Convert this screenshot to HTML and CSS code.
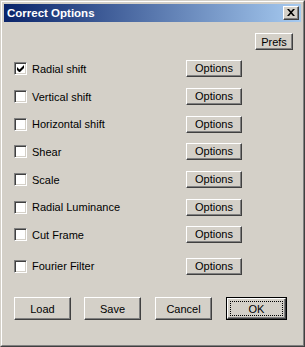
FILE: index.html
```html
<!DOCTYPE html>
<html>
<head>
<meta charset="utf-8">
<link rel="stylesheet" href="styles.css">
</head>
<body>
<div class="window">
  <div class="frame">
    <div class="titlebar">
      <span class="title">Correct Options</span>
      <span class="close">
        <svg width="8" height="7" viewBox="0 0 8 7"><path d="M0 0h2l2 2.3L6 0h2L5 3.5 8 7H6L4 4.7 2 7H0l3-3.5z" fill="#000"/></svg>
      </span>
    </div>
    <div class="content">
      <div class="prefs-row"><span class="btn prefs">Prefs</span></div>
      <div class="options">
        <div class="row"><label class="chk"><span class="box"><svg width="7" height="7" viewBox="0 0 7 7"><path d="M0 2v3l2 2h1l4-4V0L2.5 4.5z" fill="#000"/></svg></span>Radial shift</label><span class="btn opt">Options</span></div>
        <div class="row"><label class="chk"><span class="box"></span>Vertical shift</label><span class="btn opt">Options</span></div>
        <div class="row"><label class="chk"><span class="box"></span>Horizontal shift</label><span class="btn opt">Options</span></div>
        <div class="row"><label class="chk"><span class="box"></span>Shear</label><span class="btn opt">Options</span></div>
        <div class="row"><label class="chk"><span class="box"></span>Scale</label><span class="btn opt">Options</span></div>
        <div class="row"><label class="chk"><span class="box"></span>Radial Luminance</label><span class="btn opt">Options</span></div>
        <div class="row"><label class="chk"><span class="box"></span>Cut Frame</label><span class="btn opt">Options</span></div>
        <div class="row last"><label class="chk"><span class="box"></span>Fourier Filter</label><span class="btn opt">Options</span></div>
      </div>
      <div class="actions">
        <span class="btn act">Load</span>
        <span class="btn act">Save</span>
        <span class="btn act">Cancel</span>
        <span class="default"><span class="btn ok"><span class="focus">OK</span></span></span>
      </div>
    </div>
  </div>
</div>
</body>
</html>
```
FILE: styles.css
```css
html, body { margin: 0; padding: 0; background: #d4d0c8; }
.window {
  width: 305px; height: 347px; box-sizing: border-box;
  background: #d4d0c8;
  border: 1px solid; border-color: #d4d0c8 #404040 #404040 #d4d0c8;
  font-family: "Liberation Sans", Arial, sans-serif; font-size: 11px; color: #000;
}
.frame {
  height: 100%; box-sizing: border-box;
  border: 1px solid; border-color: #fff #808080 #808080 #fff;
  padding: 2px;
  display: flex; flex-direction: column;
}
.titlebar {
  height: 18px; flex: none;
  background: linear-gradient(to right, #0a246a, #a6caf0);
  display: flex; align-items: center; justify-content: space-between;
  padding-left: 3px;
}
.title { color: #fff; font-weight: bold; font-size: 11.5px; }
.close {
  width: 14px; height: 12px; margin-right: 2px;
  background: #d4d0c8;
  border: 1px solid; border-color: #fff #404040 #404040 #fff;
  box-shadow: inset -1px -1px 0 #808080;
  display: flex; align-items: center; justify-content: center;
}
.close svg { display: block; margin-left: -1px; margin-top: -1px; }
.content { padding: 11px 8px 0 10px; }
.prefs-row { display: flex; justify-content: flex-end; }
.btn {
  box-sizing: border-box;
  background: #d4d0c8;
  border: 1px solid; border-color: #fff #404040 #404040 #fff;
  box-shadow: inset -1px -1px 0 #808080;
  display: flex; align-items: center; justify-content: center;
}
.prefs { width: 38px; height: 17px; }
.options { margin-top: 5px; }
.row {
  height: 27.7px;
  display: grid; grid-template-columns: 172px 56px; align-items: center;
}
.row.last { margin-top: 3.5px; }
.opt { height: 17px; padding-bottom: 1px; }
.chk { display: flex; align-items: center; gap: 5px; }
.box {
  width: 13px; height: 13px; box-sizing: border-box; flex: none;
  background: #fff;
  border: 1px solid; border-color: #808080 #fff #fff #808080;
  box-shadow: inset 1px 1px 0 #404040, inset -1px -1px 0 #d4d0c8;
  display: flex; align-items: center; justify-content: center;
}
.box svg { display: block; }
.actions { margin-top: 17px; display: flex; }
.act { width: 57px; height: 23px; }
.act + .act { margin-left: 14px; }
.act:first-child + .act { margin-left: 13px; }
.default { margin-left: 14px; border: 1px solid #000; width: 61px; height: 23px; box-sizing: border-box; display: flex; }
.ok { width: 100%; height: 100%; padding: 2px; }
.focus {
  flex: 1; align-self: stretch;
  border: 1px dotted #000;
  display: flex; align-items: center; justify-content: center;
}
```
